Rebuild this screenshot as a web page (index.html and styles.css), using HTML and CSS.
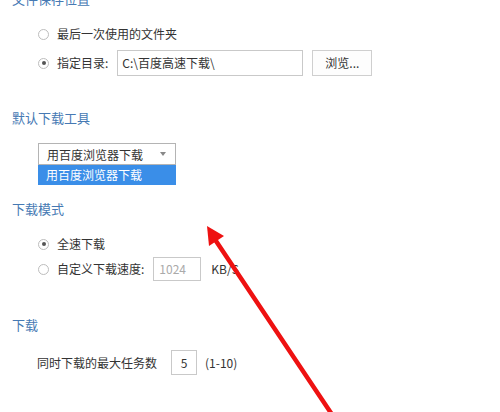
FILE: index.html
```html
<!doctype html>
<html lang="zh-CN">
<head>
	<meta charset="UTF-8" />
	<title>下载设置</title>
<link rel="stylesheet" href="styles.css">
</head>
<body>
	<section id="wrap">
		<h2>文件保存位置</h2>
		<div class="group first">
			<label class="row">
				<span class="radio"></span>
				<span>最后一次使用的文件夹</span>
			</label>
			<div class="row tall">
				<span class="radio on"></span>
				<span>指定目录:</span>
				<span class="field path">C:\百度高速下载\</span>
				<span class="btn">浏览...</span>
			</div>
		</div>

		<h2>默认下载工具</h2>
		<div class="group">
			<div class="select">
				<span>用百度浏览器下载</span>
				<i class="caret"></i>
			</div>
			<div class="option">用百度浏览器下载</div>
		</div>

		<h2>下载模式</h2>
		<div class="group">
			<label class="row">
				<span class="radio on"></span>
				<span>全速下载</span>
			</label>
			<div class="row tall speed">
				<span class="radio"></span>
				<span>自定义下载速度:</span>
				<span class="field num">1024</span>
				<span class="unit">KB/S</span>
			</div>
		</div>

		<h2>下载</h2>
		<div class="group">
			<div class="row tall task">
				<span>同时下载的最大任务数</span>
				<span class="field count">5</span>
				<span class="unit">(1-10)</span>
			</div>
		</div>
	</section>

	<!-- 红色箭头 -->
	<svg class="arrow" width="500" height="412" viewBox="0 0 500 412">
		<line x1="333" y1="416" x2="214" y2="238" stroke="#ee1111" stroke-width="4.5" stroke-linecap="round"/>
		<polygon points="207,226 224,236 209,246" fill="#ee1111"/>
	</svg>
</body>
</html>
```

FILE: styles.css
```css
*{
	margin: 0;
	padding: 0;
	box-sizing: border-box;
}
body{
	background: #fff;
	font-family: "Noto Sans CJK SC", sans-serif;
	font-size: 12px;
	color: #333;
	overflow: hidden;
}
#wrap{
	width: 500px;
	height: 412px;
	padding-left: 12px;
	margin-top: -9px;
}
h2{
	font-size: 13px;
	font-weight: normal;
	line-height: 16px;
	height: 16px;
	color: #4679b3;
}
.group{
	padding-left: 26px;
	margin: 17px 0 0;
}
.group.first{
	margin-bottom: 34px;
}
.row{
	display: flex;
	align-items: center;
	height: 20px;
	line-height: 20px;
}
.row.tall{
	height: 26px;
	margin-top: 6px;
}
.radio{
	width: 11px;
	height: 11px;
	border: 1px solid #bdbdbd;
	border-radius: 50%;
	margin-right: 8px;
	display: flex;
	align-items: center;
	justify-content: center;
	background: #fff;
}
.radio.on::after{
	content: "";
	width: 4px;
	height: 4px;
	border-radius: 50%;
	background: #555;
}
.field{
	display: flex;
	align-items: center;
	height: 26px;
	border: 1px solid #c9c9c9;
	background: #fff;
}
.path{
	width: 186px;
	margin-left: 9px;
	padding-left: 4px;
}
.btn{
	width: 60px;
	height: 26px;
	margin-left: 9px;
	border: 1px solid #cfcfcf;
	background: #fdfdfd;
	display: flex;
	align-items: center;
	justify-content: center;
}

.select{
	width: 138px;
	height: 22px;
	border: 1px solid #b4b4b4;
	padding-left: 8px;
	display: flex;
	align-items: center;
	justify-content: space-between;
	padding-right: 9px;
}
.caret{
	width: 0;
	height: 0;
	border-left: 3.5px solid transparent;
	border-right: 3.5px solid transparent;
	border-top: 4px solid #888;
}
.option{
	width: 138px;
	height: 20px;
	line-height: 20px;
	padding-left: 8px;
	background: #3a8ee8;
	color: #fff;
	margin-bottom: 16px;
}

.row.speed{
	height: 24px;
	margin-top: 3px;
	margin-bottom: 36px;
}
.num{
	width: 48px;
	height: 24px;
	margin-left: 9px;
	padding-left: 5px;
	color: #aaa;
}
.unit{
	margin-left: 10px;
}
.row.task{
	margin-top: 0;
	height: 25px;
	padding-left: 0;
	margin-left: -1px;
}
.count{
	width: 26px;
	height: 25px;
	margin-left: 14px;
	justify-content: center;
}
.task .unit{
	margin-left: 8px;
}
.arrow{
	position: absolute;
	left: 0;
	top: 0;
	pointer-events: none;
}
```
